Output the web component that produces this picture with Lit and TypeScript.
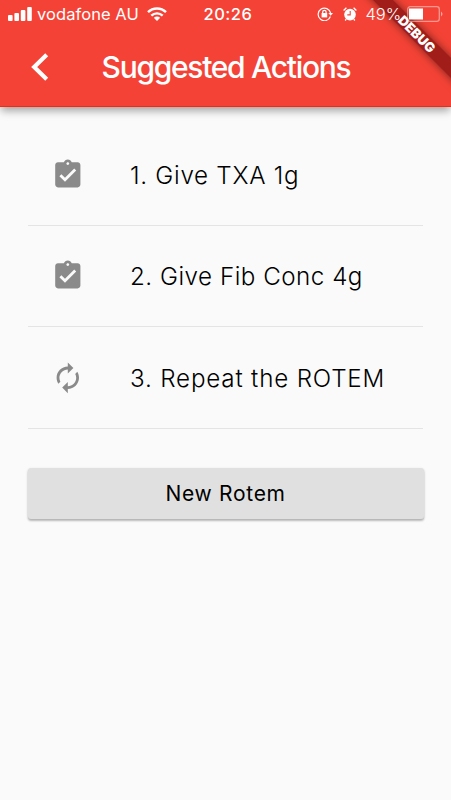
import { LitElement, html, css, svg } from "lit";
import { customElement } from "lit/decorators.js";

const clipboard = svg`<path fill-rule="evenodd" d="M19 3h-4.18C14.4 1.84 13.3 1 12 1c-1.3 0-2.4.84-2.82 2H5c-1.1 0-2 .9-2 2v14c0 1.1.9 2 2 2h14c1.1 0 2-.9 2-2V5c0-1.1-.9-2-2-2zm-7 0c.55 0 1 .45 1 1s-.45 1-1 1-1-.45-1-1 .45-1 1-1zm-2 14l-4-4 1.41-1.41L10 14.17l6.59-6.59L18 9l-8 8z"/>`;
const renew = svg`<path d="M12 6v3l4-4-4-4v3c-4.42 0-8 3.58-8 8 0 1.57.46 3.03 1.24 4.26L6.7 14.8c-.45-.83-.7-1.79-.7-2.8 0-3.31 2.69-6 6-6zm6.76 1.74L17.3 9.2c.44.84.7 1.79.7 2.8 0 3.31-2.69 6-6 6v-3l-4 4 4 4v-3c4.42 0 8-3.58 8-8 0-1.57-.46-3.03-1.24-4.26z"/>`;

const actions = [
  { icon: clipboard, text: "1. Give TXA 1g", cls: "txa" },
  { icon: clipboard, text: "2. Give Fib Conc 4g", cls: "fib" },
  { icon: renew, text: "3. Repeat the ROTEM", cls: "repeat" },
];

@customElement("app-root")
export class AppRoot extends LitElement {
  static styles = css`
    :host { display: block; width: 451px; height: 800px; overflow: hidden; background: #fafafa; font-family: Inter, "Liberation Sans", sans-serif; color: #000; }
    svg { display: block; }
    header { height: 107px; box-sizing: border-box; background: #f44336; color: #fff; border-bottom: 1px solid #f22a12; box-shadow: 0 5px 8px -1px rgba(0,0,0,.34); position: relative; }
    .status { height: 28px; display: grid; grid-template-columns: 1fr auto 1fr; align-items: center; font-size: 16.5px; white-space: nowrap; padding: 0 8px; position: relative; z-index: 1; }
    .left, .right { display: flex; align-items: center; }
    .right { justify-content: flex-end; }
    .carrier { margin: 0 8px 0 5px; letter-spacing: .07px; }
    .time { font-weight: 500; letter-spacing: .5px; margin: 0 0 0 5px; }
    .pct { margin: 0 6px 0 9px; font-weight: 300; letter-spacing: -.1px; }
    .alarm { margin-left: 10px; }
    .bar { height: 78px; display: grid; grid-template-columns: 81px 1fr 80px; align-items: center; }
    .back { margin-left: 31px; }
    h1 { margin: 0; font-size: 30px; line-height: 36px; font-weight: 500; letter-spacing: -1.3px; text-align: center; white-space: nowrap; }
    .corner { position: absolute; right: 0; top: 0; width: 110px; height: 106px; overflow: hidden; }
    .banner { position: absolute; left: -14px; top: 27px; width: 180px; height: 14px; line-height: 14px; transform: rotate(45deg); background: #a11d1a; box-shadow: 0 0 9px rgba(0,0,0,.5); font-size: 13.2px; font-weight: 900; text-align: center; }
    main { padding: 17px 28px 0; }
    .row { height: 101.6px; box-sizing: border-box; border-bottom: 1px solid #e4e4e4; display: grid; grid-template-columns: 102px 1fr; align-items: center; font-size: 24.2px; font-weight: 350; white-space: nowrap; }
    .row span { padding-top: 2px; }
    .txa { letter-spacing: .72px; }
    .fib { letter-spacing: .5px; }
    .repeat { letter-spacing: .82px; }
    .row svg { margin-left: 22.8px; fill: #8a8a8a; }
    button { display: block; width: 396px; height: 51px; margin: 39px 0 0 -.4px; padding: 0; border: 0; border-radius: 3px; background: #e0e0e0; font: 400 21px Inter, sans-serif; letter-spacing: .7px; color: #000; box-shadow: 0 2px 2px rgba(0,0,0,.2), 0 1px 3px rgba(0,0,0,.14); }
  `;

  render() {
    return html`
      <header>
        <div class="corner"><div class="banner">DEBUG</div></div>
        <div class="status">
          <div class="left">
            <svg width="24" height="14" viewBox="0 0 24 14" fill="#fff"><rect y="8" width="4.6" height="6" rx="1"/><rect x="6.4" y="6" width="4.6" height="8" rx="1"/><rect x="12.8" y="3" width="4.6" height="11" rx="1"/><rect x="19.2" width="4.6" height="14" rx="1"/></svg>
            <span class="carrier">vodafone AU</span>
            <svg width="20" height="14" viewBox="0 0 20 14" fill="none" stroke="#fff" stroke-width="2.4"><path d="M1 5.2C6 .2 14 .2 19 5.2M4.3 8.6c3.3-3 8.1-3 11.4 0"/><path d="M6.8 10.8q3.2-2.4 6.4 0L10 14z" fill="#fff" stroke="none"/></svg>
          </div>
          <span class="time">20:26</span>
          <div class="right">
            <svg width="16" height="14" viewBox="0 0 16 14" fill="none" stroke="#fff" stroke-width="1.2"><path d="M13.4 9.5A6.3 6.3 0 1 1 13.6 6"/><path d="M11.4 6h4.6l-2.3 2.8z" fill="#fff" stroke="none"/><rect x="4.6" y="6" width="5.6" height="4.4" fill="#fff" stroke="none"/><path d="M5.7 6.3V5a1.7 1.7 0 0 1 3.4 0v1.3"/></svg>
            <svg class="alarm" width="14" height="14" viewBox="0 0 14 14"><circle cx="7" cy="7.6" r="5.8" fill="#fff"/><path d="M.6 3.4L3.4.8M13.4 3.4L10.6.8M3.2 12.2l-1 1.3M10.8 12.2l1 1.3" stroke="#fff" stroke-width="1.3"/><path d="M7.2 4v3.9H4.3" fill="none" stroke="#f44336" stroke-width="1.1"/></svg>
            <span class="pct">49%</span>
            <svg width="36" height="16" viewBox="0 0 36 16"><rect x=".7" y=".7" width="31.6" height="14.6" rx="2.5" fill="none" stroke="#fff" stroke-opacity=".45" stroke-width="1.3"/><rect x="2" y="2.5" width="14" height="11" fill="#fff"/><path d="M34 5.5q3 2.5 0 5z" fill="#fff" opacity=".5"/></svg>
          </div>
        </div>
        <div class="bar">
          <svg class="back" width="18" height="30" viewBox="0 0 18 30"><path d="M15.7 2.8L3.2 15l12.5 12.2" fill="none" stroke="#fff" stroke-width="4.2"/></svg>
          <h1>Suggested Actions</h1>
        </div>
      </header>
      <main>
        ${actions.map((a) => html`<div class="row ${a.cls}"><svg width="33.6" height="33.6" viewBox="0 0 24 24">${a.icon}</svg><span>${a.text}</span></div>`)}
        <button>New Rotem</button>
      </main>
    `;
  }
}
